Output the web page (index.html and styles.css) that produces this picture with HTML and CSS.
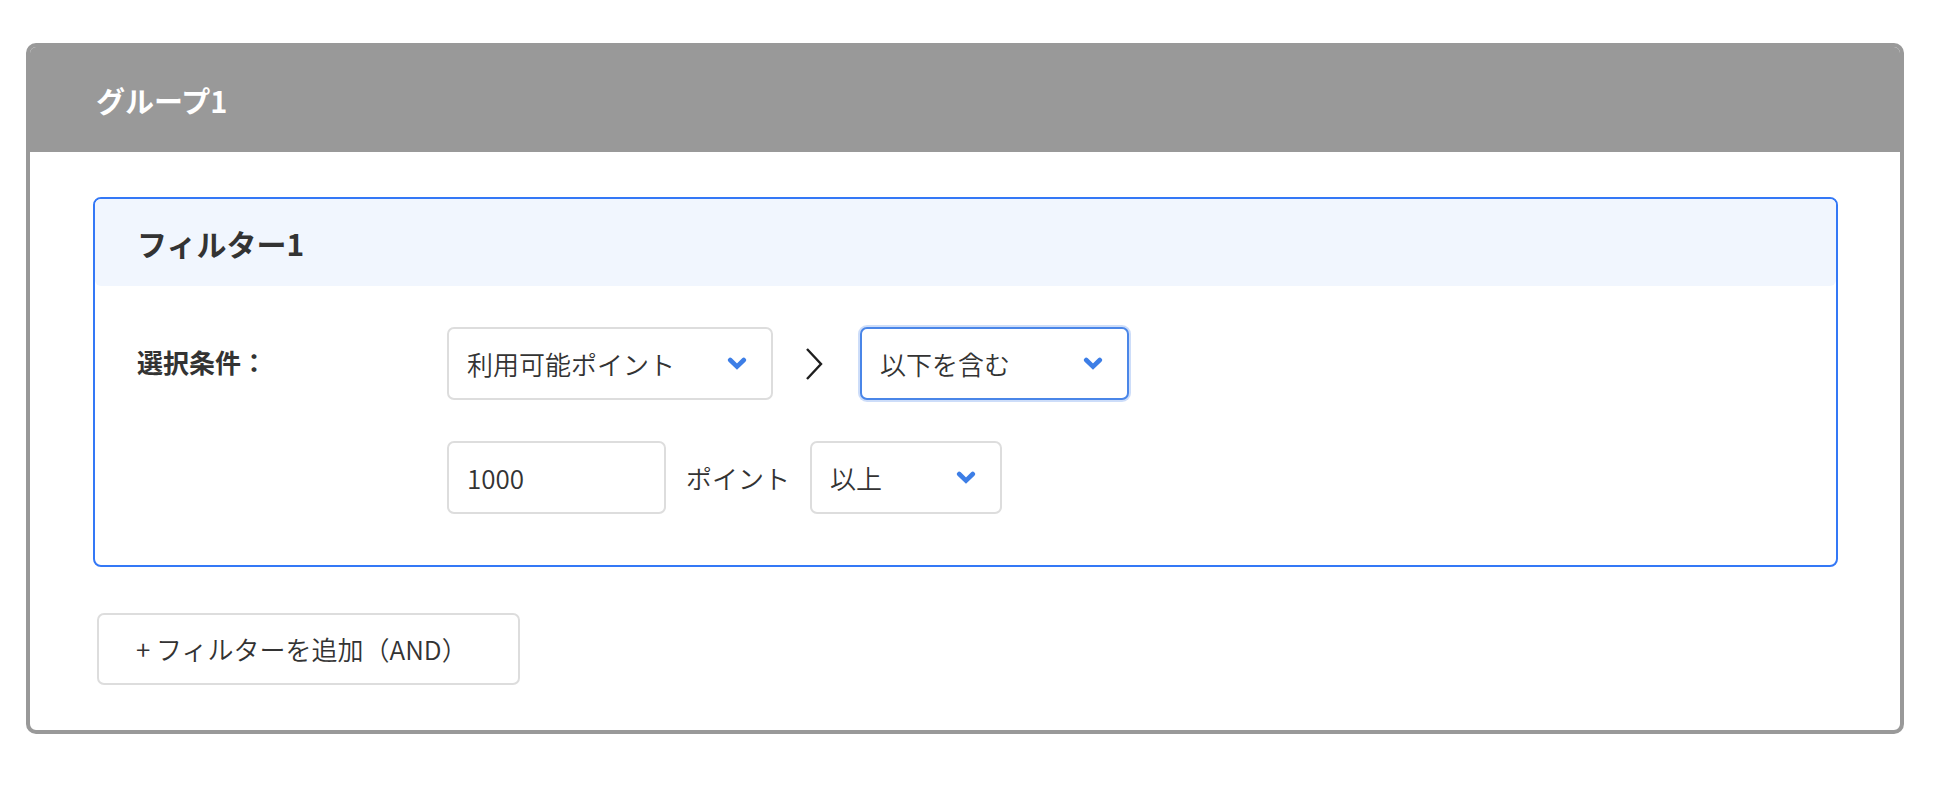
FILE: index.html
```html
<!DOCTYPE html>
<html lang="ja">
<head>
<meta charset="utf-8">
<title>グループ1</title>
<link rel="stylesheet" href="styles.css">
</head>
<body>
<div class="page">
  <section class="group">
    <header class="group-head"><h2 class="group-title">グループ1</h2></header>
    <div class="group-body">
      <div class="filter">
        <div class="filter-head"><h3 class="filter-title">フィルター1</h3></div>
        <div class="filter-body">
          <div class="cond-label">選択条件：</div>
          <div class="cond-fields">
            <div class="row">
              <div class="select select-field">
                <span class="select-text">利用可能ポイント</span>
                <svg class="chev" viewBox="0 0 20 13" aria-hidden="true"><polyline points="3.2,3 10,9.6 16.8,3"/></svg>
              </div>
              <span class="arrow">
                <svg viewBox="0 0 18 32" aria-hidden="true"><polyline points="2,1 16,16 2,31"/></svg>
              </span>
              <div class="select select-op is-focused">
                <span class="select-text">以下を含む</span>
                <svg class="chev" viewBox="0 0 20 13" aria-hidden="true"><polyline points="3.2,3 10,9.6 16.8,3"/></svg>
              </div>
            </div>
            <div class="row row-second">
              <div class="input-box">1000</div>
              <span class="unit">ポイント</span>
              <div class="select select-cmp">
                <span class="select-text">以上</span>
                <svg class="chev" viewBox="0 0 20 13" aria-hidden="true"><polyline points="3.2,3 10,9.6 16.8,3"/></svg>
              </div>
            </div>
          </div>
        </div>
      </div>
      <button class="add-btn" type="button">+ フィルターを追加（AND）</button>
    </div>
  </section>
</div>
</body>
</html>
```

FILE: styles.css
```css
* { box-sizing: border-box; }

html, body {
  margin: 0;
  padding: 0;
  background: #ffffff;
}

body {
  font-family: "Noto Sans CJK JP", "Noto Sans", sans-serif;
  color: #333333;
  font-size: 26px;
  font-weight: 350;
}

.page {
  padding: 43px 30px 0 26px;
}

.group {
  width: 1878px;
  border: 4px solid #999999;
  border-radius: 10px;
  background: #ffffff;
  overflow: hidden;
}

.group-head {
  background: #999999;
  height: 105px;
  display: flex;
  align-items: center;
  padding-left: 66px;
}

.group-title {
  margin: 0;
  font-size: 29px;
  line-height: 36px;
  font-weight: 700;
  color: #ffffff;
}

.group-body {
  padding: 45px 62px 45px 63px;
}

.filter {
  border: 2px solid #3478f6;
  border-radius: 8px;
  background: #ffffff;
}

.filter-head {
  height: 87px;
  background: #f1f6fe;
  border-radius: 6px;
  display: flex;
  align-items: center;
  padding-left: 42px;
}

.filter-title {
  margin: 0;
  font-size: 30px;
  line-height: 36px;
  font-weight: 700;
  color: #333333;
}

.filter-body {
  display: flex;
  padding: 41px 42px 51px 42px;
}

.cond-label {
  width: 310px;
  height: 73px;
  line-height: 70px;
  font-weight: 700;
  font-size: 26px;
  color: #333333;
}

.cond-fields {
  display: flex;
  flex-direction: column;
  gap: 41px;
}

.row {
  display: flex;
  align-items: center;
  height: 73px;
}

.select,
.input-box {
  height: 73px;
  border: 2px solid #dddddd;
  border-radius: 7px;
  background: #ffffff;
  display: flex;
  align-items: center;
  padding-left: 18px;
  font-size: 26px;
  line-height: 36px;
  color: #333333;
}

.select {
  justify-content: space-between;
  padding-right: 24px;
}

.select-field { width: 326px; }
.select-op { width: 269px; }
.select-cmp { width: 192px; }
.input-box { width: 219px; }

.is-focused {
  border-color: #4a86e8;
  box-shadow: 0 0 0 2px rgba(74, 134, 232, 0.28);
}

.chev {
  width: 20px;
  height: 13px;
  flex: none;
  fill: none;
  stroke: #3d7ee6;
  stroke-width: 4.6;
  stroke-linecap: round;
  stroke-linejoin: miter;
}

.arrow {
  width: 87px;
  display: flex;
  justify-content: flex-start;
  padding-left: 32px;
}

.arrow svg {
  width: 18px;
  height: 32px;
  fill: none;
  stroke: #1e1e1e;
  stroke-width: 2.4;
}

.unit {
  margin: 0 20px;
  font-size: 26px;
  line-height: 36px;
  color: #333333;
}

.add-btn {
  display: block;
  margin: 46px 0 0 4px;
  width: 423px;
  height: 72px;
  border: 2px solid #dddddd;
  border-radius: 7px;
  background: #ffffff;
  padding: 0 0 0 37px;
  text-align: left;
  font-family: "Noto Sans CJK JP", "Noto Sans", sans-serif;
  font-size: 26px;
  font-weight: 350;
  line-height: 36px;
  color: #333333;
}
```
